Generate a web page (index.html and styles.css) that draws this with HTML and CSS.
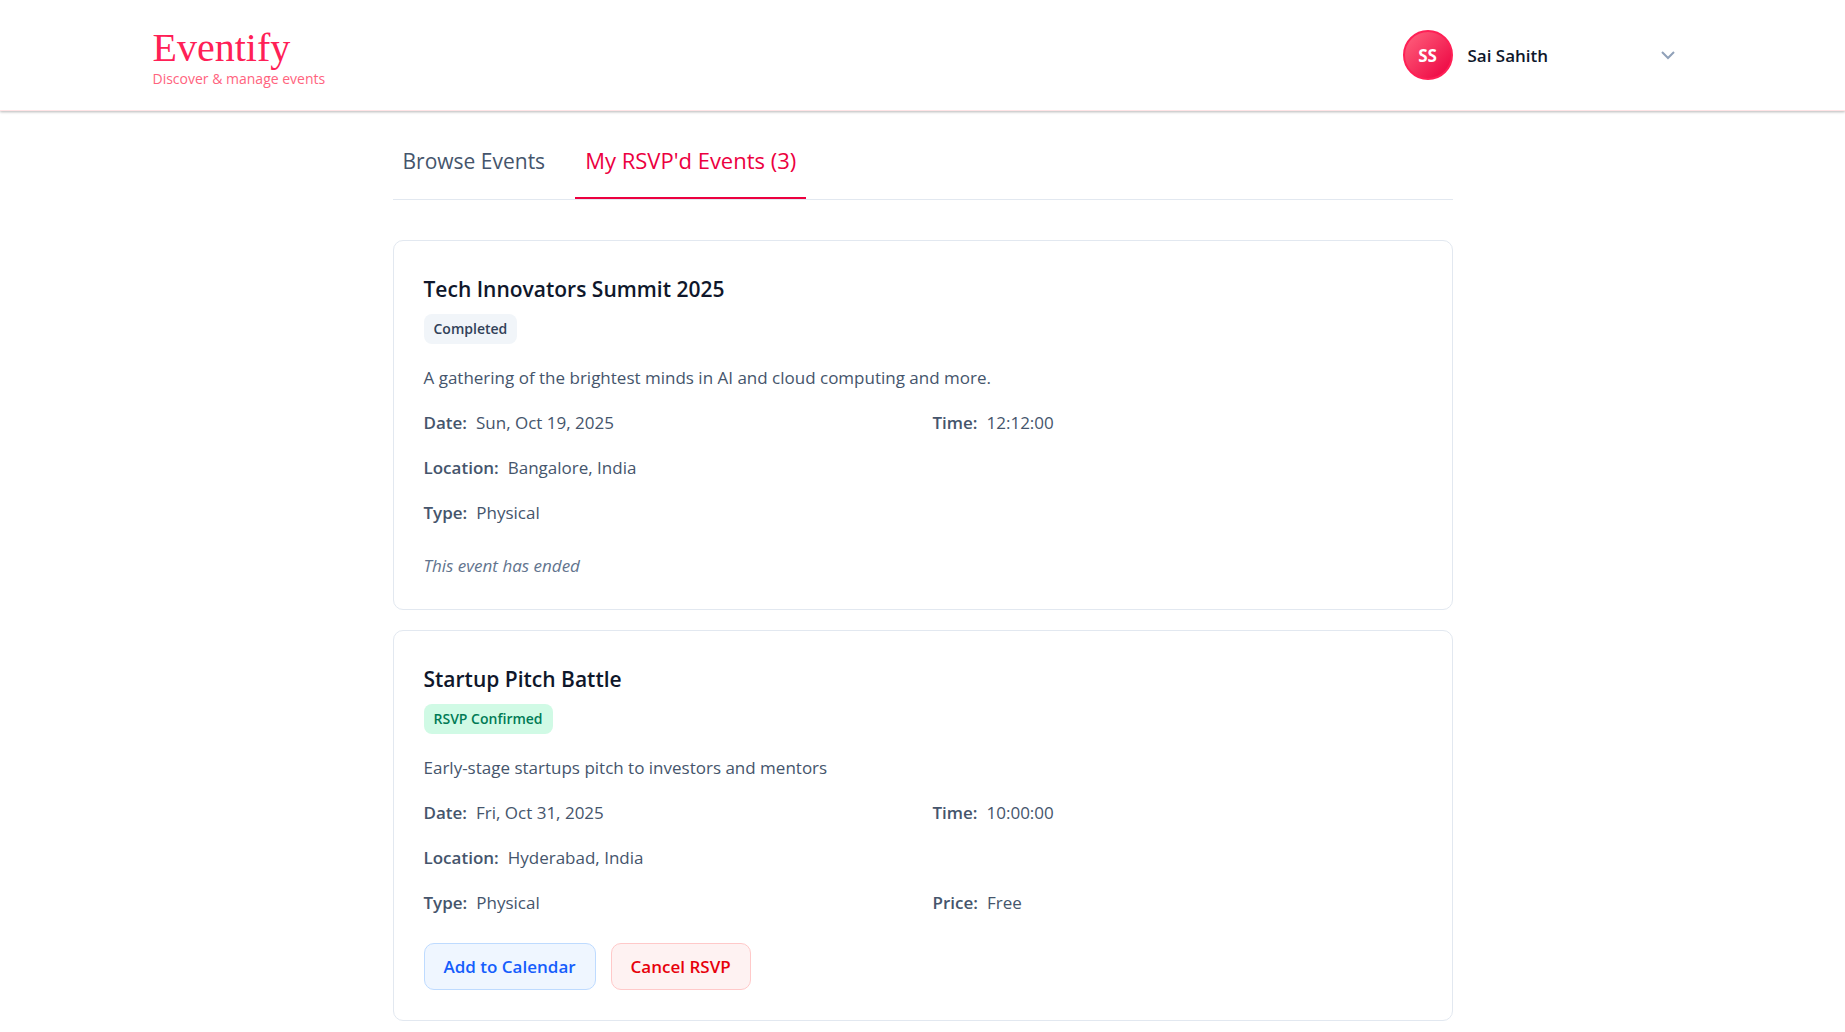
FILE: index.html
```html
<!DOCTYPE html>
<html lang="en">
<head>
<meta charset="utf-8">
<meta name="viewport" content="width=device-width, initial-scale=1">
<title>Eventify</title>
<link rel="stylesheet" href="styles.css">
</head>
<body>
<header class="site-header">
  <div class="header-inner">
    <div class="brand">
      <a class="brand-name" href="#">Eventify</a>
      <p class="brand-tagline">Discover &amp; manage events</p>
    </div>
    <button class="user-menu" type="button">
      <span class="avatar">SS</span>
      <span class="user-name">Sai Sahith</span>
      <svg class="chevron" viewBox="0 0 20 20" aria-hidden="true"><path d="M4 7l6 6 6-6"/></svg>
    </button>
  </div>
</header>
<main class="content">
  <nav class="tabs">
    <button class="tab" type="button">Browse Events</button>
    <button class="tab tab-active" type="button">My RSVP'd Events (3)</button>
  </nav>
  <section class="event-list">
    <article class="card">
      <h2 class="card-title">Tech Innovators Summit 2025</h2>
      <span class="badge badge-completed">Completed</span>
      <p class="description">A gathering of the brightest minds in AI and cloud computing and more.</p>
      <dl class="details">
        <div class="detail"><dt>Date:</dt><dd>Sun, Oct 19, 2025</dd></div>
        <div class="detail"><dt>Time:</dt><dd>12:12:00</dd></div>
        <div class="detail detail-wide"><dt>Location:</dt><dd>Bangalore, India</dd></div>
        <div class="detail"><dt>Type:</dt><dd>Physical</dd></div>
      </dl>
      <p class="ended">This event has ended</p>
    </article>
    <article class="card">
      <h2 class="card-title">Startup Pitch Battle</h2>
      <span class="badge badge-confirmed">RSVP Confirmed</span>
      <p class="description">Early-stage startups pitch to investors and mentors</p>
      <dl class="details">
        <div class="detail"><dt>Date:</dt><dd>Fri, Oct 31, 2025</dd></div>
        <div class="detail"><dt>Time:</dt><dd>10:00:00</dd></div>
        <div class="detail detail-wide"><dt>Location:</dt><dd>Hyderabad, India</dd></div>
        <div class="detail"><dt>Type:</dt><dd>Physical</dd></div>
        <div class="detail"><dt>Price:</dt><dd>Free</dd></div>
      </dl>
      <div class="actions">
        <button class="action action-calendar" type="button">Add to Calendar</button>
        <button class="action action-cancel" type="button">Cancel RSVP</button>
      </div>
    </article>
  </section>
</main>
</body>
</html>
```
FILE: styles.css
```css
* {
  box-sizing: border-box;
}

body {
  margin: 0;
  background: #fff;
  color: #45556c;
  font-family: "Segoe UI", "Open Sans", "Noto Sans", sans-serif;
  font-size: 17px;
  line-height: 27px;
}

h2, p, dl, dd {
  margin: 0;
}

button {
  font: inherit;
  cursor: pointer;
}

.site-header {
  border-bottom: 1px solid #ffe4e6;
  box-shadow: 0 1px 3px rgba(0, 0, 0, 0.2), 0 1px 2px rgba(0, 0, 0, 0.1);
}

.header-inner {
  display: flex;
  justify-content: space-between;
  align-items: center;
  max-width: 1540px;
  min-height: 110px;
  margin: 0 auto;
}

.brand {
  padding-top: 7px;
}

.brand-name {
  display: block;
  color: #ff2056;
  font-family: Georgia, "Liberation Serif", serif;
  font-size: 40px;
  line-height: 40px;
  text-decoration: none;
}

.brand-tagline {
  color: #ff637e;
  font-size: 14px;
  line-height: 22px;
}

.user-menu {
  display: flex;
  align-items: center;
  gap: 15px;
  width: 305px;
  padding: 10px 15px;
  border: 0;
  background: none;
  color: #0f172b;
  font-weight: 600;
}

.avatar {
  display: grid;
  place-items: center;
  width: 50px;
  height: 50px;
  border: 2px solid #ff2056;
  border-radius: 50%;
  background: linear-gradient(135deg, #ff637e, #ec003f);
  color: #fff;
  font-weight: 700;
}

.chevron {
  width: 20px;
  height: 20px;
  margin-left: auto;
  fill: none;
  stroke: #90a1b9;
  stroke-width: 2;
}

.content {
  max-width: 1060px;
  margin: 0 auto;
  padding-top: 18px;
}

.tabs {
  display: flex;
  gap: 20px;
  border-bottom: 1px solid #e2e8f0;
}

.tab {
  padding: 15px 10px 20px;
  border: 0;
  background: none;
  color: #45556c;
  font-size: 21px;
  line-height: 33px;
}

.tab-active {
  border-bottom: 2px solid #ec003f;
  color: #ec003f;
  font-size: 22px;
}

.event-list {
  display: grid;
  gap: 20px;
  padding: 40px 0 20px;
}

.card {
  padding: 30px;
  border: 1px solid #e2e8f0;
  border-radius: 10px;
}

.card-title {
  margin-bottom: 6px;
  color: #0f172b;
  font-size: 21px;
  font-weight: 600;
  line-height: 37px;
}

.badge {
  display: block;
  width: fit-content;
  padding: 4px 10px;
  border-radius: 8px;
  font-size: 14px;
  font-weight: 600;
  line-height: 22px;
}

.badge-completed {
  background: #f1f5f9;
  color: #314158;
}

.badge-confirmed {
  background: #d0fae5;
  color: #007a55;
}

.description {
  margin: 20px 0 18px;
}

.details {
  display: grid;
  grid-template-columns: 1fr 1fr;
  gap: 18px 20px;
}

.detail {
  display: flex;
  gap: 9px;
}

.detail dt {
  font-weight: 600;
}

.detail-wide {
  grid-column: 1 / -1;
}

.ended {
  margin-top: 26px;
  color: #62748e;
  font-style: italic;
}

.actions {
  display: flex;
  gap: 15px;
  margin-top: 27px;
}

.action {
  padding: 9px 19px;
  border: 1px solid;
  border-radius: 10px;
  font-weight: 600;
}

.action-calendar {
  border-color: #bedbff;
  background: #eff6ff;
  color: #155dfc;
}

.action-cancel {
  border-color: #ffc9c9;
  background: #fef2f2;
  color: #e7000b;
}
```
